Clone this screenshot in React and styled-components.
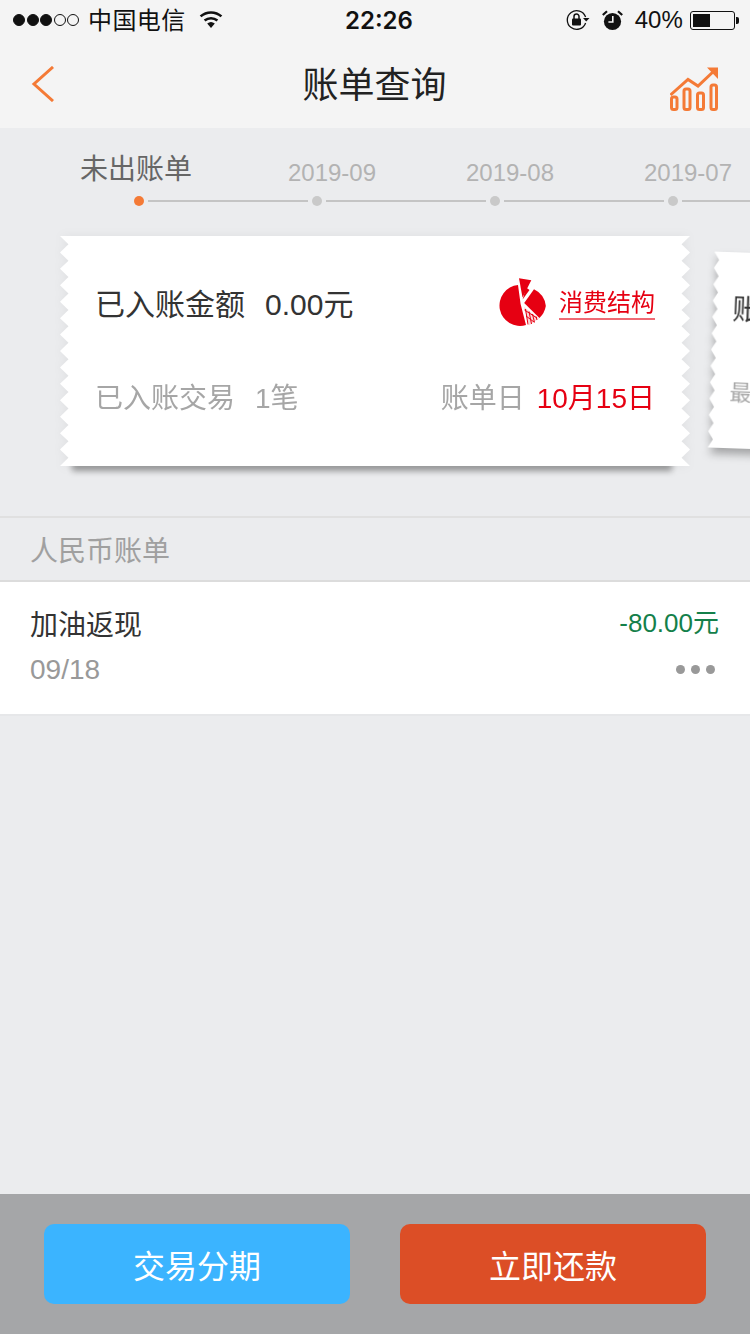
import React from "react";
import styled, { createGlobalStyle } from "styled-components";

// clip path with saw teeth down the short sides of a ticket card
const teethPath = (w, h, teeth, depth, leftOnly) => {
  const step = h / teeth;
  const pts = [];
  if (leftOnly) {
    pts.push(`${w}px 0px`, `${w}px ${h}px`);
  } else {
    for (let i = 0; i < teeth; i++) {
      pts.push(`${w}px ${i * step}px`, `${w - depth}px ${(i + 0.5) * step}px`);
    }
    pts.push(`${w}px ${h}px`);
  }
  for (let i = teeth; i > 0; i--) {
    pts.push(`0px ${i * step}px`, `${depth}px ${(i - 0.5) * step}px`);
  }
  pts.push("0px 0px");
  return `polygon(${pts.join(",")})`;
};

const steps = [
  { label: "未出账单", active: true },
  { label: "2019-09" },
  { label: "2019-08" },
  { label: "2019-07" },
];

export default function App() {
  return (
    <Page>
      <GlobalStyle />
      <TopArea>
        <StatusBar>
          <StatusLeft>
            <Signal>
              {[1, 1, 1, 0, 0].map((on, i) => (
                <SignalDot key={i} $on={on} />
              ))}
            </Signal>
            <Carrier>中国电信</Carrier>
            <WifiIcon />
          </StatusLeft>
          <Clock>22:26</Clock>
          <StatusRight>
            <LockIcon />
            <AlarmIcon />
            <Percent>40%</Percent>
            <Battery>
              <BatteryFill />
            </Battery>
            <BatteryTip />
          </StatusRight>
        </StatusBar>
        <NavBar>
          <BackIcon />
          <Title>账单查询</Title>
          <ChartIcon />
        </NavBar>
      </TopArea>

      <Content>
        <Labels>
          {steps.map((s) => (
            <StepLabel key={s.label} $active={s.active}>
              {s.label}
            </StepLabel>
          ))}
        </Labels>
        <Track>
          {steps.map((s) => (
            <React.Fragment key={s.label}>
              <TrackDot $active={s.active} />
              <TrackLine />
            </React.Fragment>
          ))}
        </Track>

        <Cards>
          <CardShadow>
            <Card>
              <CardRow>
                <AmountLabel>已入账金额</AmountLabel>
                <AmountValue>0.00元</AmountValue>
                <PieIcon />
                <StructureLink>消费结构</StructureLink>
              </CardRow>
              <CardRow $low>
                <MutedLabel>已入账交易</MutedLabel>
                <MutedValue>1笔</MutedValue>
                <BillDayLabel>账单日</BillDayLabel>
                <BillDay>10月15日</BillDay>
              </CardRow>
            </Card>
          </CardShadow>
          <NextShadow>
            <NextCard>
              <NextLabel>账</NextLabel>
              <NextMuted>最</NextMuted>
            </NextCard>
          </NextShadow>
        </Cards>

        <SectionHead>人民币账单</SectionHead>
        <BillRow>
          <BillLine>
            <BillName>加油返现</BillName>
            <BillAmount>-80.00元</BillAmount>
          </BillLine>
          <BillLine>
            <BillDate>09/18</BillDate>
            <More>
              <MoreDot />
              <MoreDot />
              <MoreDot />
            </More>
          </BillLine>
        </BillRow>
      </Content>

      <Footer>
        <ActionButton>交易分期</ActionButton>
        <ActionButton $pay>立即还款</ActionButton>
      </Footer>
    </Page>
  );
}

const WifiIcon = () => (
  <WifiSvg viewBox="0 0 24 17">
    <path d="M12 17 L8.2 12.6 A6 6 0 0 1 15.8 12.6 Z" fill="#111" />
    <path d="M5.6 9.6 A10 10 0 0 1 18.4 9.6" fill="none" stroke="#111" strokeWidth="2.6" />
    <path d="M1.6 5.4 A15.6 15.6 0 0 1 22.4 5.4" fill="none" stroke="#111" strokeWidth="2.6" />
  </WifiSvg>
);

const LockIcon = () => (
  <IconSvg width="24" height="22" viewBox="0 0 24 22">
    <path d="M19.6 8 A9.4 9.4 0 1 0 19.6 14" fill="none" stroke="#111" strokeWidth="1.3" />
    <path d="M17 9 H23.5 L20.2 12.6 Z" fill="#111" />
    <rect x="6" y="9.6" width="9" height="7" rx="1" fill="#111" />
    <path d="M8 10 V7.6 A2.5 2.5 0 0 1 13 7.6 V10" fill="none" stroke="#111" strokeWidth="1.5" />
  </IconSvg>
);

const AlarmIcon = () => (
  <IconSvg width="21" height="21" viewBox="0 0 21 21">
    <circle cx="10.5" cy="11.5" r="8.6" fill="#111" />
    <path d="M0.8 5 L5 1.2 M20.2 5 L16 1.2" stroke="#111" strokeWidth="2.2" />
    <path d="M10.8 6 V12 H6.4" fill="none" stroke="#f4f4f4" strokeWidth="1.6" />
  </IconSvg>
);

const BackIcon = () => (
  <BackSvg viewBox="0 0 24 36">
    <path d="M22 1 L3 18 L22 35" fill="none" stroke="#f47a36" strokeWidth="3" />
  </BackSvg>
);

const ChartIcon = () => (
  <ChartSvg viewBox="0 0 48 44">
    <g fill="none" stroke="#f47a36" strokeWidth="3">
      <rect x="1.5" y="30" width="5.5" height="12.5" rx="2" />
      <rect x="14" y="22" width="6" height="20.5" rx="2" />
      <rect x="27.5" y="26" width="6" height="16.5" rx="2" />
      <rect x="41" y="18" width="5.5" height="24.5" rx="2" />
      <path d="M0.5 28 L18 12.5 L28 19 L45 3" />
    </g>
    <path d="M37 0.5 H48 V12 Z" fill="#f47a36" />
  </ChartSvg>
);

const PieIcon = () => (
  <PieSvg viewBox="0 0 48 48">
    <g fill="#e60012">
      <path d="M19 7 A20.5 20.5 0 1 0 27 47 L21.6 26 Z" />
      <path d="M20 0.3 L32.3 2.3 L23.5 19.5 Z" />
      <path d="M27 9.5 L30.5 12 L23.6 21.5 Z" />
      <path d="M35 11.3 A21 21 0 0 1 46.8 28 A21 21 0 0 1 40.4 40 L25.2 25 Z" />
    </g>
    <path d="M25 29 L40 40.5 L30 47.5 Z" fill="#fbd5d8" />
    <path d="M26.5 31 L29 46.5 M30 33.5 L32.5 46 M33.5 36 L35.5 44.5 M37 38.5 L38 42 M25.5 32 L38 40 M27 38 L35 44" stroke="#e60012" strokeWidth="1" fill="none" />
  </PieSvg>
);

const GlobalStyle = createGlobalStyle`
  html, body {
    margin: 0;
    padding: 0;
    background: #ebecee;
  }
  * {
    box-sizing: border-box;
  }
`;

const Page = styled.div`
  width: 750px;
  height: 1334px;
  display: flex;
  flex-direction: column;
  overflow: hidden;
  font-family: "Liberation Sans", "Noto Sans CJK SC", sans-serif;
  background: #ebecee;
`;

const TopArea = styled.header`
  height: 128px;
  background: #f4f4f4;
`;

const StatusBar = styled.div`
  height: 40px;
  padding: 0 11px 0 13px;
  display: grid;
  grid-template-columns: 332px auto 1fr;
  align-items: center;
  color: #111;
`;

const StatusLeft = styled.div`
  display: flex;
  align-items: center;
`;

const Signal = styled.div`
  display: flex;
  gap: 1.5px;
`;

const SignalDot = styled.span`
  width: 12px;
  height: 12px;
  border-radius: 50%;
  border: 1px solid #111;
  background: ${(p) => (p.$on ? "#111" : "transparent")};
`;

const Carrier = styled.span`
  margin-left: 9px;
  padding-bottom: 4px;
  font-size: 24px;
  letter-spacing: 0.4px;
`;

const WifiSvg = styled.svg`
  width: 24px;
  height: 17px;
  margin-left: 13px;
  margin-bottom: 2px;
`;

const Clock = styled.span`
  font-family: Inter, "Liberation Sans", sans-serif;
  font-size: 24px;
  font-weight: 600;
`;

const StatusRight = styled.div`
  display: flex;
  align-items: center;
  justify-content: flex-end;
`;

const IconSvg = styled.svg`
  margin-right: 12px;
`;

const Percent = styled.span`
  font-size: 24px;
  letter-spacing: 0.1px;
`;

const Battery = styled.div`
  width: 45px;
  height: 19px;
  margin-left: 7px;
  padding: 2px;
  border: 1px solid #111;
  border-radius: 3px;
`;

const BatteryFill = styled.div`
  width: 17px;
  height: 100%;
  background: #111;
`;

const BatteryTip = styled.div`
  width: 3px;
  height: 7px;
  margin-left: 1px;
  background: #111;
  border-radius: 0 2px 2px 0;
`;

const NavBar = styled.nav`
  height: 88px;
  padding: 0 32px 0 31px;
  display: grid;
  grid-template-columns: 1fr auto 1fr;
  align-items: center;
`;

const BackSvg = styled.svg`
  width: 24px;
  height: 36px;
`;

const Title = styled.h1`
  margin: 0 0 4px;
  font-size: 36px;
  font-weight: 400;
  color: #222;
`;

const ChartSvg = styled.svg`
  width: 48px;
  height: 44px;
  justify-self: end;
  margin-top: 10px;
`;

const Content = styled.main`
  flex: 1;
  display: flex;
  flex-direction: column;
`;

const Labels = styled.div`
  display: flex;
  padding: 22px 0 0 47px;
  height: 62px;
  white-space: nowrap;
`;

const StepLabel = styled.span`
  flex: none;
  width: 178px;
  text-align: center;
  font-size: ${(p) => (p.$active ? "28px" : "24px")};
  line-height: ${(p) => (p.$active ? "36px" : "48px")};
  margin-right: ${(p) => (p.$active ? "18px" : "0")};
  margin-top: ${(p) => (p.$active ? "2px" : "-1px")};
  color: ${(p) => (p.$active ? "#666" : "#b3b3b3")};
`;

const Track = styled.div`
  display: flex;
  align-items: center;
  height: 22px;
  padding-left: 134px;
`;

const TrackDot = styled.span`
  flex: none;
  width: 10px;
  height: 10px;
  border-radius: 50%;
  background: ${(p) => (p.$active ? "#f47a36" : "#c9c9c9")};
`;

const TrackLine = styled.span`
  flex: none;
  width: 160px;
  height: 2px;
  margin: 0 4px;
  background: #c4c4c4;
`;

const Cards = styled.div`
  display: flex;
  align-items: flex-start;
  padding: 24px 0 0 60px;
  height: 304px;
  overflow: hidden;
`;

const CardShadow = styled.div`
  position: relative;
  flex: none;
  width: 630px;
  height: 230px;
  filter: drop-shadow(0 0 5px rgba(0, 0, 0, 0.05));

  /* the dark edge that only shows under the card */
  &::before {
    content: "";
    position: absolute;
    left: 12px;
    right: 18px;
    bottom: 2px;
    height: 10px;
    box-shadow: 0 7px 6px rgba(0, 0, 0, 0.36);
  }
`;

const Card = styled.section`
  position: relative;
  height: 100%;
  padding: 0 35px;
  display: flex;
  flex-direction: column;
  background: #fff;
  clip-path: ${teethPath(630, 230, 14, 8.5)};
`;

const CardRow = styled.div`
  display: flex;
  align-items: center;
  height: 40px;
  margin-top: ${(p) => (p.$low ? "54px" : "46px")};
`;

const AmountLabel = styled.span`
  font-size: 30px;
  color: #333;
`;

const AmountValue = styled.span`
  margin-left: 20px;
  font-size: 30px;
  color: #333;
`;

const PieSvg = styled.svg`
  width: 48px;
  height: 48px;
  margin-left: auto;
`;

const StructureLink = styled.a`
  margin: 3px 0 0 12px;
  font-size: 24px;
  line-height: 30px;
  color: #e60012;
  border-bottom: 2px solid #ef6a74;
`;

const MutedLabel = styled.span`
  font-size: 28px;
  color: #a6a6a6;
`;

const MutedValue = styled(MutedLabel)`
  margin-left: 20px;
`;

const BillDayLabel = styled(MutedLabel)`
  margin-left: auto;
`;

const BillDay = styled.span`
  margin-left: 12px;
  font-size: 28px;
  color: #e60012;
`;

const NextShadow = styled.div`
  flex: none;
  margin: 19px 0 0 21px;
  transform: rotate(2deg);
  filter: drop-shadow(1px 6px 4px rgba(0, 0, 0, 0.3));
`;

const NextCard = styled.section`
  width: 200px;
  height: 196px;
  padding: 35px 0 0 20px;
  display: flex;
  flex-direction: column;
  gap: 47px;
  background: #fff;
  clip-path: ${teethPath(200, 196, 12, 5, true)};
`;

const NextLabel = styled.span`
  font-size: 28px;
  color: #333;
`;

const NextMuted = styled.span`
  font-size: 22px;
  color: #a6a6a6;
`;

const SectionHead = styled.div`
  height: 66px;
  padding-left: 30px;
  display: flex;
  align-items: center;
  font-size: 28px;
  color: #a0a0a0;
  border-top: 2px solid #e0e0e0;
  border-bottom: 2px solid #dcdcdc;
`;

const BillRow = styled.div`
  height: 134px;
  padding: 21px 31px 0 30px;
  display: flex;
  flex-direction: column;
  gap: 7px;
  background: #fff;
  border-bottom: 2px solid #e6e7e9;
`;

const BillLine = styled.div`
  display: flex;
  align-items: center;
  justify-content: space-between;
  height: 40px;
`;

const BillName = styled.span`
  font-size: 28px;
  color: #333;
`;

const BillAmount = styled.span`
  margin-bottom: 6px;
  font-size: 26px;
  color: #14804a;
`;

const BillDate = styled.span`
  font-size: 28px;
  color: #999;
`;

const More = styled.div`
  display: flex;
  gap: 6px;
  padding: 0 4px 2px 0;
`;

const MoreDot = styled.span`
  width: 9px;
  height: 9px;
  border-radius: 50%;
  background: #999;
`;

const Footer = styled.footer`
  height: 140px;
  padding: 30px 44px;
  display: flex;
  justify-content: space-between;
  background: #a5a6a8;
`;

const ActionButton = styled.button`
  width: 306px;
  height: 80px;
  border: none;
  border-radius: 10px;
  font-family: inherit;
  font-size: 32px;
  color: #fff;
  background: ${(p) => (p.$pay ? "#dc4e26" : "#3bb4ff")};
`;
